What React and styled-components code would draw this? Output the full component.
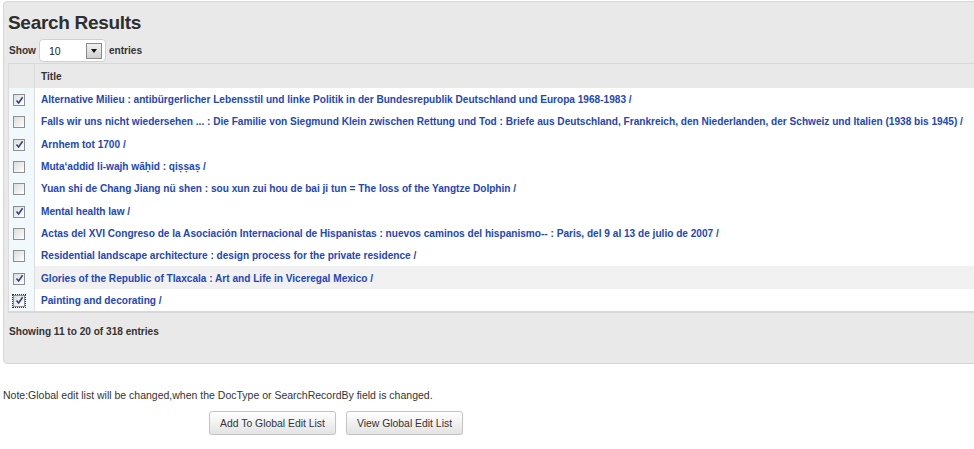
import React from 'react';
import styled, { createGlobalStyle } from 'styled-components';

const GlobalStyle = createGlobalStyle`
    html, body {
        margin: 0;
        padding: 0;
        background: #ffffff;
        overflow: hidden;
    }
    body {
        font-family: 'Liberation Sans', Arial, sans-serif;
        font-size: 10.1px;
        color: #333333;
    }
`;

const Page = styled.div`
    width: 974px;
    overflow: hidden;
    padding-top: 1px;
`;

const Panel = styled.div`
    width: 1000px;
    margin-left: 3px;
    height: 363px;
    box-sizing: border-box;
    background: #e9e9e9;
    border: 1px solid #d6d6d6;
    border-radius: 4px;
    padding: 0 0 0 4px;
`;

const Heading = styled.h2`
    margin: 0;
    padding: 10px 0 0 0;
    height: 26px;
    font-family: 'Liberation Sans', Arial, sans-serif;
    font-size: 19px;
    font-weight: 700;
    letter-spacing: -0.3px;
    color: #2e2e2e;
`;

const LengthBar = styled.div`
    display: flex;
    align-items: center;
    gap: 3px;
    height: 25px;
    padding-left: 1px;
    font-weight: 700;
    color: #333;
`;

const Select = styled.div`
    width: 67px;
    height: 23px;
    box-sizing: border-box;
    background: #fff;
    border: 1px solid #d0d0d0;
    border-radius: 4px;
    display: flex;
    align-items: center;
    justify-content: space-between;
    padding: 0 3px 0 9px;
    font-weight: 400;
    font-size: 10.5px;
    color: #222;
`;

const DropButton = styled.span`
    width: 16px;
    height: 16px;
    box-sizing: border-box;
    border: 1px solid #8a8a8a;
    background: linear-gradient(#f2f2f2, #cfcfcf);
    display: flex;
    align-items: center;
    justify-content: center;

    &::after {
        content: '';
        border-left: 3px solid transparent;
        border-right: 3px solid transparent;
        border-top: 4px solid #111;
    }
`;

const Table = styled.div`
    border-left: 1px solid #dcdcdc;
    border-top: 1px solid #d8d8d8;
    border-bottom: 2px solid #d8d8d8;
    background: #fff;
`;

const Row = styled.div`
    display: grid;
    grid-template-columns: 26px 1fr;
    height: ${(p) => (p.header ? '24px' : '22.3px')};
    background: ${(p) => (p.header ? '#e9e9e9' : p.hover ? '#f1f1f1' : '#ffffff')};
`;

const CheckCell = styled.div`
    display: flex;
    align-items: center;
    padding-left: 4px;
    border-right: 1px solid #dcdcdc;
    background: ${(p) => (p.header ? '#e9e9e9' : '#f2f9fc')};
`;

const TitleCell = styled.div`
    display: flex;
    align-items: center;
    padding-left: 6px;
    padding-top: ${(p) => (p.header ? '0' : '1px')};
    white-space: nowrap;
    font-weight: 700;
    color: ${(p) => (p.header ? '#333' : '#2347b5')};
`;

const Box = styled.span`
    width: 12px;
    height: 12px;
    box-sizing: border-box;
    border: 1px solid #8e8f8f;
    background: linear-gradient(135deg, #dcdcdc, #ffffff);
    display: flex;
    align-items: center;
    justify-content: center;
    margin-top: 2px;
    outline: ${(p) => (p.focus ? '1px dotted #333' : 'none')};
    outline-offset: 0;
`;

const Footer = styled.div`
    padding: 13px 0 0 1px;
    font-weight: 700;
    color: #333;
`;

const Note = styled.p`
    margin: 25px 0 0 3px;
    font-size: 10.5px;
    color: #333;
`;

const Actions = styled.div`
    display: flex;
    gap: 10px;
    margin: 10px 0 0 209px;
`;

const Button = styled.button`
    height: 24px;
    padding: 0 10px;
    font-family: 'Liberation Sans', Arial, sans-serif;
    font-size: 10.4px;
    color: #333;
    background: linear-gradient(#ffffff, #e3e3e3);
    border: 1px solid #c4c4c4;
    border-radius: 3px;
    box-shadow: 0 1px 1px rgba(0, 0, 0, 0.12);
`;

const Check = ({ checked, focus }) => (
    <Box focus={focus}>
        {checked && (
            <svg width="9" height="9" viewBox="0 0 9 9">
                <path d="M1.5 4.5 L3.6 7 L7.6 1.2" fill="none" stroke="#2b3f86" strokeWidth="1.5" />
            </svg>
        )}
    </Box>
);

const results = [
    { title: 'Alternative Milieu : antibürgerlicher Lebensstil und linke Politik in der Bundesrepublik Deutschland und Europa 1968-1983 /', checked: true },
    { title: 'Falls wir uns nicht wiedersehen ... : Die Familie von Siegmund Klein zwischen Rettung und Tod : Briefe aus Deutschland, Frankreich, den Niederlanden, der Schweiz und Italien (1938 bis 1945) /', checked: false },
    { title: 'Arnhem tot 1700 /', checked: true },
    { title: 'Muta‘addid li-wajh wāḥid : qiṣṣaṣ /', checked: false },
    { title: 'Yuan shi de Chang Jiang nü shen : sou xun zui hou de bai ji tun = The loss of the Yangtze Dolphin /', checked: false },
    { title: 'Mental health law /', checked: true },
    { title: 'Actas del XVI Congreso de la Asociación Internacional de Hispanistas : nuevos caminos del hispanismo-- : Paris, del 9 al 13 de julio de 2007 /', checked: false },
    { title: 'Residential landscape architecture : design process for the private residence /', checked: false },
    { title: 'Glories of the Republic of Tlaxcala : Art and Life in Viceregal Mexico /', checked: true, hover: true },
    { title: 'Painting and decorating /', checked: true, focus: true },
];

const App = () => (
    <Page>
        <GlobalStyle />
        <Panel>
            <Heading>Search Results</Heading>
            <LengthBar>
                Show
                <Select>
                    10
                    <DropButton />
                </Select>
                entries
            </LengthBar>
            <Table>
                <Row header>
                    <CheckCell header />
                    <TitleCell header>Title</TitleCell>
                </Row>
                {results.map((r) => (
                    <Row key={r.title} hover={r.hover}>
                        <CheckCell>
                            <Check checked={r.checked} focus={r.focus} />
                        </CheckCell>
                        <TitleCell>{r.title}</TitleCell>
                    </Row>
                ))}
            </Table>
            <Footer>Showing 11 to 20 of 318 entries</Footer>
        </Panel>
        <Note>Note:Global edit list will be changed,when the DocType or SearchRecordBy field is changed.</Note>
        <Actions>
            <Button>Add To Global Edit List</Button>
            <Button>View Global Edit List</Button>
        </Actions>
    </Page>
);

export default App;
